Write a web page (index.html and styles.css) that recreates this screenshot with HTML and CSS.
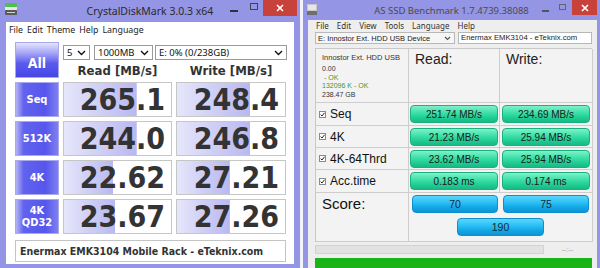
FILE: index.html
```html
<!DOCTYPE html>
<html>
<head>
<meta charset="utf-8">
<link rel="stylesheet" href="styles.css">
</head>
<body>
<div class="win cdm">
  <div class="titlebar">
    <div class="tleft">
      <svg class="ticon cdm-icon" width="12" height="12" viewBox="0 0 12 12">
        <rect x="0" y="0" width="12" height="4" rx="1" fill="#4cc24c"/>
        <rect x="0" y="4" width="12" height="3" fill="#e8e8e8"/>
        <rect x="0" y="7" width="12" height="5" rx="1" fill="#5a5a5a"/>
        <rect x="2" y="9" width="8" height="1" fill="#d0d0d0"/>
      </svg>
    </div>
    <div class="title">CrystalDiskMark 3.0.3 x64</div>
    <div class="tright">
      <span class="tmin"></span><span class="tmax"></span>
      <span class="tclose"><svg width="8" height="8" viewBox="0 0 8 8"><path d="M1 1L7 7M7 1L1 7" stroke="#fff" stroke-width="1.6"/></svg></span>
    </div>
  </div>
  <div class="client">
    <div class="menu"><span>File</span><span>Edit</span><span>Theme</span><span>Help</span><span>Language</span></div>
    <div class="cdm-body">
      <div class="cdm-grid">
        <div class="btn all">All</div>
        <div class="topright">
          <div class="sels">
            <div class="sel s1"><span>5</span><svg width="9" height="6" viewBox="0 0 9 6"><path d="M1 1L4.5 4.5L8 1" fill="none" stroke="#111" stroke-width="1.4"/></svg></div>
            <div class="sel s2"><span>1000MB</span><svg width="9" height="6" viewBox="0 0 9 6"><path d="M1 1L4.5 4.5L8 1" fill="none" stroke="#111" stroke-width="1.4"/></svg></div>
            <div class="sel s3"><span>E: 0% (0/238GB)</span><svg width="9" height="6" viewBox="0 0 9 6"><path d="M1 1L4.5 4.5L8 1" fill="none" stroke="#111" stroke-width="1.4"/></svg></div>
          </div>
          <div class="heads"><div>Read [MB/s]</div><div>Write [MB/s]</div></div>
        </div>

        <div class="btn lbl">Seq</div>
        <div class="val" style="background-size:68% 100%">265.1</div>
        <div class="val" style="background-size:68% 100%">248.4</div>

        <div class="btn lbl">512K</div>
        <div class="val" style="background-size:68% 100%">244.0</div>
        <div class="val" style="background-size:68% 100%">246.8</div>

        <div class="btn lbl">4K</div>
        <div class="val" style="background-size:46% 100%">22.62</div>
        <div class="val" style="background-size:49% 100%">27.21</div>

        <div class="btn lbl two">4K<br>QD32</div>
        <div class="val" style="background-size:48% 100%">23.67</div>
        <div class="val" style="background-size:49% 100%">27.26</div>
      </div>
      <div class="comment">Enermax EMK3104 Mobile Rack - eTeknix.com</div>
    </div>
  </div>
</div>
<div class="gap"></div>
<div class="win as">
  <div class="titlebar">
    <div class="tleft">
      <svg class="ticon as-icon" width="10" height="11" viewBox="0 0 10 11">
        <rect x="0" y="0" width="10" height="7" fill="#c8c8c8"/>
        <rect x="1" y="1" width="8" height="5" fill="#e6e6e6"/>
        <rect x="0" y="7" width="10" height="4" fill="#6e6e6e"/>
      </svg>
    </div>
    <div class="title">AS SSD Benchmark 1.7.4739.38088</div>
    <div class="tright">
      <span class="tmin"></span><span class="tmax"></span>
      <span class="tclose"><svg width="8" height="8" viewBox="0 0 8 8"><path d="M1 1L7 7M7 1L1 7" stroke="#fff" stroke-width="1.6"/></svg></span>
    </div>
  </div>
  <div class="client">
    <div class="asmenu"><span>File</span><span>Edit</span><span>View</span><span>Tools</span><span>Language</span><span>Help</span></div>
    <div class="drive-row">
      <div class="drive-sel"><span>E: Innostor Ext. HDD USB Device</span><svg width="7" height="5" viewBox="0 0 7 5"><path d="M1 1L3.5 3.5L6 1" fill="none" stroke="#555" stroke-width="1.1"/></svg></div>
      <div class="textbox">Enermax EMK3104 - eTeknix.com</div>
    </div>
    <div class="asgrid">
      <div class="cell info">
        <div class="dark big">Innostor Ext. HDD USB</div>
        <div class="dark">0.00</div>
        <div class="ok">&nbsp;- OK</div>
        <div class="ok">132096 K - OK</div>
        <div class="dark">238.47 GB</div>
      </div>
      <div class="cell head">Read:</div>
      <div class="cell head">Write:</div>

      <div class="cell lab"><svg class="chk" width="7" height="7" viewBox="0 0 7 7"><rect x="0.5" y="0.5" width="6" height="6" fill="#fff" stroke="#8a8a8a"/><path d="M1.6 3.6L3 5L5.5 1.8" fill="none" stroke="#222" stroke-width="1"/></svg>Seq</div>
      <div class="cell bc r"><div class="gbar">251.74 MB/s</div></div>
      <div class="cell bc w"><div class="gbar">234.69 MB/s</div></div>

      <div class="cell lab"><svg class="chk" width="7" height="7" viewBox="0 0 7 7"><rect x="0.5" y="0.5" width="6" height="6" fill="#fff" stroke="#8a8a8a"/><path d="M1.6 3.6L3 5L5.5 1.8" fill="none" stroke="#222" stroke-width="1"/></svg>4K</div>
      <div class="cell bc r"><div class="gbar">21.23 MB/s</div></div>
      <div class="cell bc w"><div class="gbar">25.94 MB/s</div></div>

      <div class="cell lab"><svg class="chk" width="7" height="7" viewBox="0 0 7 7"><rect x="0.5" y="0.5" width="6" height="6" fill="#fff" stroke="#8a8a8a"/><path d="M1.6 3.6L3 5L5.5 1.8" fill="none" stroke="#222" stroke-width="1"/></svg>4K-64Thrd</div>
      <div class="cell bc r"><div class="gbar">23.62 MB/s</div></div>
      <div class="cell bc w"><div class="gbar">25.94 MB/s</div></div>

      <div class="cell lab"><svg class="chk" width="7" height="7" viewBox="0 0 7 7"><rect x="0.5" y="0.5" width="6" height="6" fill="#fff" stroke="#8a8a8a"/><path d="M1.6 3.6L3 5L5.5 1.8" fill="none" stroke="#222" stroke-width="1"/></svg>Acc.time</div>
      <div class="cell bc r"><div class="gbar">0.183 ms</div></div>
      <div class="cell bc w"><div class="gbar">0.174 ms</div></div>

      <div class="cell score">Score:</div>
      <div class="cell scores">
        <div class="bbar">70</div>
        <div class="bbar">75</div>
        <div class="bbar total">190</div>
      </div>
    </div>
    <div class="prog-row">
      <div class="prog"></div>
      <div class="time">--:--</div>
    </div>
    <div class="greenbar"></div>
  </div>
</div>
</body>
</html>
```

FILE: styles.css
```css
* { box-sizing: border-box; }

body {
  margin: 0;
  width: 600px;
  height: 268px;
  overflow: hidden;
  background: #fff;
  display: flex;
  font-family: "Noto Sans", "Open Sans", sans-serif;
}

.win {
  height: 268px;
  background: #9595e5;
  display: flex;
  flex-direction: column;
  flex: none;
}
.cdm { width: 300px; }
.gap { width: 3px; flex: none; background: #f3f3fb; }
.as { width: 297px; }

/* title bars */
.titlebar {
  display: grid;
  grid-template-columns: 1fr auto 1fr;
  flex: none;
}
.cdm .titlebar { height: 22px; }
.as .titlebar { height: 20px; }
.tleft { display: flex; align-items: flex-start; }
.cdm-icon { margin: 3px 0 0 5px; }
.as-icon { margin: 4px 0 0 4px; }
.title {
  font-size: 10.5px;
  line-height: 23px;
  color: #2a2a2a;
  white-space: nowrap;
}
.as .title { font-size: 9.5px; line-height: 21px; color: #4a4a4a; }
.tright { display: flex; justify-content: flex-end; align-items: flex-start; }
.tmin { width: 8px; height: 2px; background: #333; margin-top: 10px; margin-right: 12px; }
.tmax { width: 8px; height: 7px; border: 1px solid #444; margin-top: 3px; margin-right: 5px; }
.tclose {
  width: 34px; height: 16px;
  background: #c7423b;
  margin-right: 3px;
  display: flex; align-items: center; justify-content: center;
}
.as .tmin { width: 7px; margin-right: 10px; background: #555; }
.as .tmax { width: 7px; height: 6px; margin-top: 4px; margin-right: 6px; border-color: #666; }
.as .tclose { width: 25px; height: 15px; }

/* ---------- CrystalDiskMark ---------- */
.cdm .client {
  flex: 1;
  margin: 0 6px 4px;
  background: #fff;
  display: flex;
  flex-direction: column;
}
.menu {
  height: 15px;
  display: flex;
  gap: 4px;
  padding-left: 3px;
  font-size: 8.8px;
  line-height: 16px;
  color: #222;
}
.cdm-body { padding: 5px 8px 0 9px; }
.cdm-grid {
  display: grid;
  grid-template-columns: 44px 109px 110px;
  grid-template-rows: 36px 35px 35px 35px 35px;
  column-gap: 4px;
  row-gap: 4px;
}
.btn {
  display: flex;
  align-items: center;
  justify-content: center;
  color: #fff;
  font-family: "DejaVu Sans Condensed", "DejaVu Sans", sans-serif;
  font-weight: bold;
  text-align: center;
  border: 1px solid #a9a9ee;
}
.all {
  font-size: 14px;
  background: linear-gradient(to bottom, #e4e4fd 0%, #a4a4f6 30%, #5a5aee 60%, #4646e6 100%);
  padding-top: 6px;
}
.lbl {
  font-size: 11px;
  line-height: 12px;
  background: linear-gradient(to right, #b4b4f6 0%, #6262ef 18%, #5656ed 70%, #8080f1 100%);
}
.topright {
  grid-column: 2 / 4;
  display: flex;
  flex-direction: column;
}
.sels {
  display: flex;
  margin-top: 3px;
  height: 15px;
  font-size: 9.5px;
  color: #111;
}
.sel {
  height: 15px;
  border: 1px solid #9a9a9a;
  display: flex;
  align-items: center;
  justify-content: space-between;
  padding: 0 3px 0 3px;
  line-height: 13px;
}
.s1 { width: 27px; margin-right: 4px; }
.s2 { width: 59px; margin-right: 2px; }
.s3 { width: 132px; margin-right: -1px; }
.heads {
  display: grid;
  grid-template-columns: 109px 110px;
  column-gap: 4px;
  margin-top: 2px;
  height: 16px;
  line-height: 17px;
  font-family: "DejaVu Sans Condensed", "DejaVu Sans", sans-serif;
  font-weight: bold;
  font-size: 13px;
  color: #333;
  text-align: center;
}
.val {
  border: 1px solid #c6c6c6;
  background-color: #fff;
  background-image: linear-gradient(to right, #e6e6fb, #b8b8f1);
  background-repeat: no-repeat;
  display: flex;
  align-items: center;
  justify-content: flex-end;
  padding-right: 6px;
  font-family: "DejaVu Sans Condensed", "DejaVu Sans", sans-serif;
  font-weight: bold;
  font-size: 30px;
  color: #333;
  line-height: 1;
}
.comment {
  margin-top: 6px;
  height: 22px;
  width: 271px;
  border: 1px solid #c4c4c4;
  padding-left: 4px;
  font-family: "DejaVu Sans Condensed", "DejaVu Sans", sans-serif;
  font-weight: bold;
  font-size: 10.5px;
  line-height: 20px;
  color: #333;
  white-space: nowrap;
}

/* ---------- AS SSD ---------- */
.as .client {
  flex: 1;
  margin: 0 3px 0 5px;
  background: #eeeeee;
  display: flex;
  flex-direction: column;
  font-family: "Liberation Sans", Arial, sans-serif;
}
.asmenu {
  height: 11px;
  display: flex;
  gap: 8px;
  padding-left: 8px;
  font-family: "Noto Sans", sans-serif;
  font-size: 8px;
  line-height: 11px;
  color: #333;
}
.drive-row {
  display: flex;
  gap: 3px;
  margin: 1px 5px 0 7px;
  height: 12px;
}
.drive-sel {
  width: 140px;
  border: 1px solid #b8b8b8;
  background: #f6f6f6;
  display: flex;
  align-items: center;
  justify-content: space-between;
  padding: 0 3px 0 2px;
  font-size: 7.5px;
  color: #222;
}
.textbox {
  flex: 1;
  border: 1px solid #b8b8b8;
  background: #fff;
  padding-left: 2px;
  font-size: 7.7px;
  line-height: 10px;
  color: #222;
  white-space: nowrap;
}
.asgrid {
  margin: 4px 5px 0 7px;
  display: grid;
  grid-template-columns: 93px 91px 93px;
  grid-template-rows: 54px 23px 22px 22px 23px 49px;
  border-top: 1px solid #c8c8c8;
  border-left: 1px solid #c8c8c8;
}
.cell {
  background: #f3f3f3;
  border-right: 1px solid #cdcdcd;
  border-bottom: 1px solid #cdcdcd;
}
.info {
  padding: 4px 0 0 6px;
  font-size: 7px;
  line-height: 8.7px;
  white-space: nowrap;
  overflow: hidden;
}
.info .big { font-size: 7.5px; line-height: 10px; margin-bottom: 2px; }
.dark { color: #333; }
.ok { color: #3a9a3a; }
.head {
  padding: 3px 0 0 6px;
  font-size: 14px;
  line-height: 14px;
  color: #222;
}
.lab {
  display: flex;
  align-items: center;
  padding-left: 3px;
  font-size: 12px;
  color: #111;
}
.chk { margin-right: 4px; }
.bc {
  display: flex;
  align-items: center;
}
.bc.r { padding: 0 1px 0 1px; }
.bc.w { padding: 0 2px 0 2px; }
.gbar {
  flex: 1;
  height: 18px;
  border-radius: 4px;
  border: 1px solid #1bb080;
  background: linear-gradient(to bottom, #7ef1c9 0%, #3adfa6 45%, #22cf94 70%, #16b985 100%);
  font-size: 10px;
  line-height: 17px;
  text-align: center;
  color: #1b1b1b;
}
.score {
  padding: 3px 0 0 6px;
  font-size: 15px;
  line-height: 16px;
  color: #111;
}
.scores {
  grid-column: 2 / 4;
  display: grid;
  grid-template-columns: 86px 86px;
  grid-template-rows: 18px 18px;
  column-gap: 5px;
  row-gap: 5px;
  justify-content: center;
  padding-top: 2px;
}
.bbar {
  border-radius: 4px;
  border: 1px solid #0c8fcf;
  background: linear-gradient(to bottom, #5ad6fc 0%, #28bdf3 45%, #14a7e6 70%, #0c94d6 100%);
  font-size: 10.5px;
  line-height: 17px;
  text-align: center;
  color: #1a2a3a;
}
.total { grid-column: 1 / 3; justify-self: center; width: 87px; }
.prog-row {
  display: flex;
  align-items: center;
  margin: 3px 5px 0 7px;
  height: 9px;
}
.prog {
  width: 229px;
  height: 9px;
  background: #e2e2e2;
  border: 1px solid #d2d2d2;
}
.time {
  margin-left: 18px;
  font-size: 7px;
  color: #999;
}
.greenbar {
  margin: 4px 5px 0 7px;
  height: 11px;
  background: #18b418;
}
```
